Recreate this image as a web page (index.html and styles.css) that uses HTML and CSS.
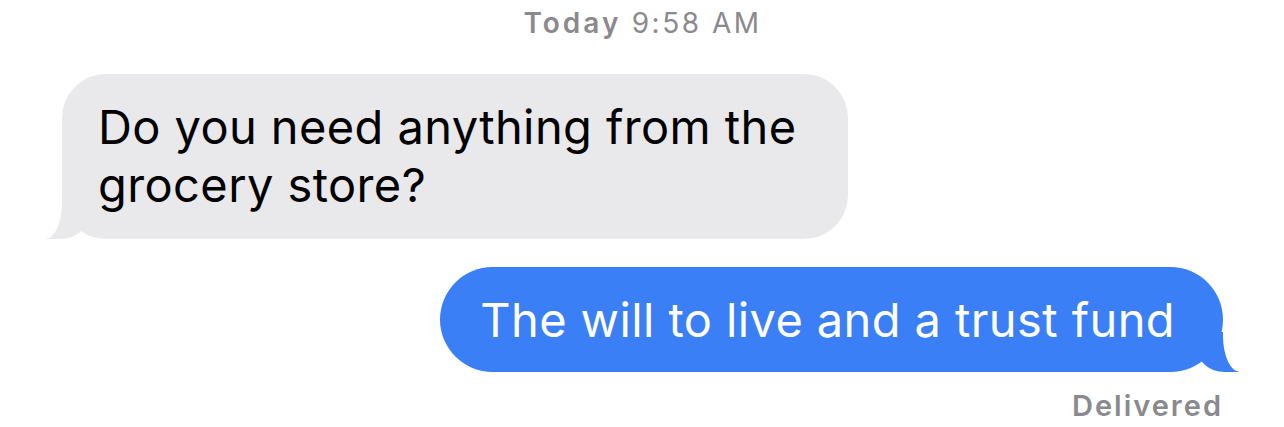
FILE: index.html
```html
<!DOCTYPE html>
<html lang="en">
<head>
	<meta charset="UTF-8">
	<title>Messages</title>
	<link rel="stylesheet" href="styles.css">
</head>
<body>
	<div id="thread">
		<div class="stamp"><b>Today</b> 9:58 AM</div>

		<div class="bubble from">Do you need anything from the<br>grocery store?</div>

		<div class="bubble sent">The will to live and a trust fund</div>

		<div class="status">Delivered</div>
	</div>
</body>
</html>
```

FILE: styles.css
```css
*{margin: 0;padding: 0;}
body {
	background: #fff;
	font-family: Inter, "Liberation Sans", sans-serif;
}
#thread {
	display: flex;
	flex-direction: column;
	padding: 0 61px 0 62px;
}

/* time header */
.stamp {
	margin-top: 8px;
	align-self: center;
	font-size: 28px;
	line-height: 30px;
	letter-spacing: 2.5px;
	color: #8a8a8e;
}
.stamp b {
	font-weight: 600;
	letter-spacing: 3px;
}

/* message bubbles */
.bubble {
	position: relative;
	font-size: 47px;
	line-height: 58px;
	letter-spacing: 0.4px;
}
.from {
	align-self: flex-start;
	margin-top: 36px;
	padding: 24px 51px 25px 36px;
	background: #e9e9eb;
	color: #000;
	border-radius: 44px;
}
.sent {
	align-self: flex-end;
	margin-top: 28px;
	padding: 24px 48px 23px 40px;
	background: #3a7ff6;
	color: #fff;
	border-radius: 53px;
}

/* tails */
.bubble:before,
.bubble:after {
	content: "";
	position: absolute;
	bottom: 0;
	height: 40px;
}
.from:before {
	left: -17px;
	width: 42px;
	background: #e9e9eb;
	border-bottom-right-radius: 26px 22px;
}
.from:after {
	left: -37px;
	width: 37px;
	background: #fff;
	border-bottom-right-radius: 17px 36px;
}
.sent:before {
	right: -17px;
	width: 42px;
	background: #3a7ff6;
	border-bottom-left-radius: 26px 22px;
}
.sent:after {
	right: -37px;
	width: 37px;
	background: #fff;
	border-bottom-left-radius: 17px 36px;
}

.status {
	align-self: flex-end;
	margin-top: 18px;
	font-size: 29px;
	line-height: 32px;
	font-weight: 600;
	letter-spacing: 2px;
	color: #8a8a8e;
}
```
